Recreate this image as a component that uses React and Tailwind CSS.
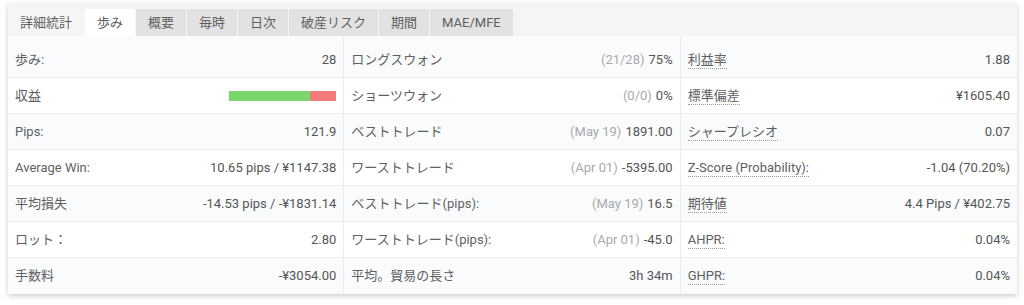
import React from "react";

const tabs = ["詳細統計", "歩み", "概要", "毎時", "日次", "破産リスク", "期間", "MAE/MFE"];

const col1 = [
  { label: "歩み:", value: "28" },
  { label: "収益", bar: true },
  { label: "Pips:", value: "121.9" },
  { label: "Average Win:", value: "10.65 pips / ¥1147.38" },
  { label: "平均損失", value: "-14.53 pips / -¥1831.14" },
  { label: "ロット：", value: "2.80" },
  { label: "手数料", value: "-¥3054.00" },
];

const col2 = [
  { label: "ロングスウォン", note: "(21/28)", value: "75%" },
  { label: "ショーツウォン", note: "(0/0)", value: "0%" },
  { label: "ベストトレード", note: "(May 19)", value: "1891.00" },
  { label: "ワーストトレード", note: "(Apr 01)", value: "-5395.00" },
  { label: "ベストトレード(pips):", note: "(May 19)", value: "16.5" },
  { label: "ワーストトレード(pips):", note: "(Apr 01)", value: "-45.0" },
  { label: "平均。貿易の長さ", value: "3h 34m" },
];

const col3 = [
  { label: "利益率", value: "1.88", dotted: true },
  { label: "標準偏差", value: "¥1605.40", dotted: true },
  { label: "シャープレシオ", value: "0.07", dotted: true },
  { label: "Z-Score (Probability):", value: "-1.04 (70.20%)", dotted: true },
  { label: "期待値", value: "4.4 Pips / ¥402.75", dotted: true },
  { label: "AHPR:", value: "0.04%", dotted: true },
  { label: "GHPR:", value: "0.04%", dotted: true },
];

const Row = ({ row, index, last }) => {
  const bg = index % 2 === 0 ? "bg-[#f9fbfd]" : "bg-white";
  const height = index === 0 ? "h-[42px] pt-[6px]" : "h-[36px]";
  return (
    <div
      className={`flex items-center justify-between px-[7px] ${height} ${bg} ${
        index < 6 ? "border-b border-[#e8ecf0]" : ""
      } ${last ? "" : "border-r border-[#e8ecf0]"}`}
    >
      <span
        className={`text-[#5f5f5f] ${
          row.dotted ? "border-b border-dotted border-[#9a9a9a] leading-[17px]" : ""
        }`}
      >
        {row.label}
      </span>
      {row.bar ? (
        <div className="flex h-[10px] w-[107px]">
          <div className="h-full w-[81px] bg-[#7ad66d]" />
          <div className="h-full flex-1 bg-[#f47c7c]" />
        </div>
      ) : (
        <span className="text-[#555]">
          {row.note && <span className="text-[#aaa] mr-1">{row.note}</span>}
          {row.value}
        </span>
      )}
    </div>
  );
};

export default function App() {
  return (
    <div
      className="bg-white w-[1024px] h-[305px] pl-2 pt-[3px] text-[13px]"
      style={{ fontFamily: 'Roboto, "Noto Sans CJK JP", sans-serif' }}
    >
      <div className="w-[1009px] bg-white shadow-[0_2px_5px_rgba(0,0,0,0.2)]">
        <div className="flex items-end h-[33px] bg-[#f5f5f5] gap-px">
          {tabs.map((t, i) => (
            <div
              key={t}
              className={`h-[27px] flex items-center px-[12px] text-[#5f5f5f] ${
                i === 0 ? "bg-transparent" : i === 1 ? "bg-white" : "bg-[#e2e2e2]"
              }`}
            >
              {t}
            </div>
          ))}
        </div>
        <div className="grid grid-cols-3">
          {[col1, col2, col3].map((col, ci) => (
            <div key={ci}>
              {col.map((row, ri) => (
                <Row key={ri} row={row} index={ri} last={ci === 2} />
              ))}
            </div>
          ))}
        </div>
      </div>
    </div>
  );
}
